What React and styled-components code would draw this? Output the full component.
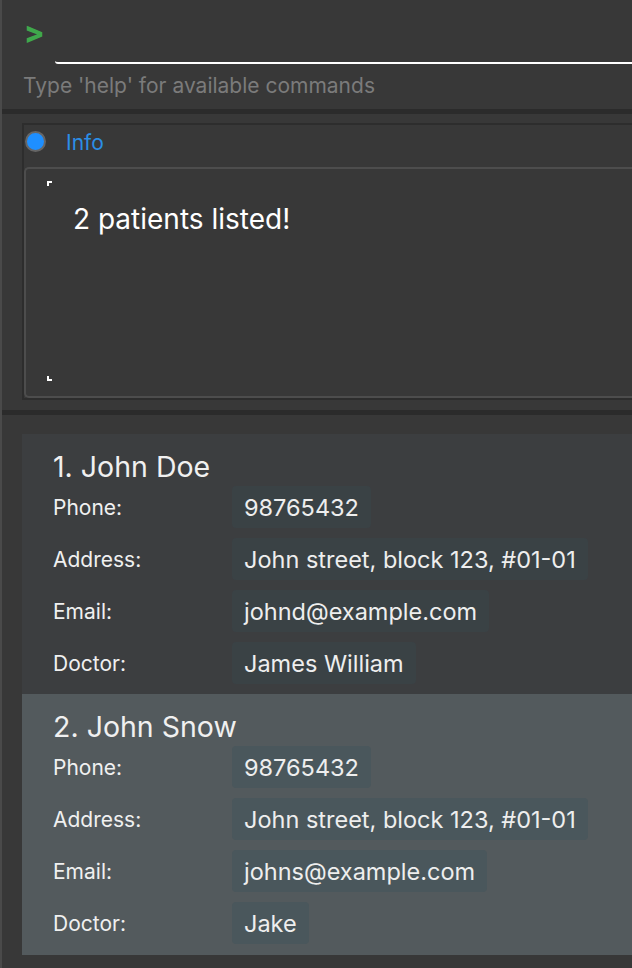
import { createGlobalStyle, styled } from 'styled-components'

const patients = [
  {
    id: 1,
    name: 'John Doe',
    phone: '98765432',
    address: 'John street, block 123, #01-01',
    email: 'johnd@example.com',
    doctor: 'James William',
  },
  {
    id: 2,
    name: 'John Snow',
    phone: '98765432',
    address: 'John street, block 123, #01-01',
    email: 'johns@example.com',
    doctor: 'Jake',
    selected: true,
  },
]

const App = () => {
  return (
    <>
      <GlobalStyle />
      <Window>
        <CommandBox>
          <CommandRow>
            <Prompt>&gt;</Prompt>
            <CommandInput spellCheck={false} />
          </CommandRow>
          <Hint>Type 'help' for available commands</Hint>
        </CommandBox>
        <Divider />
        <ResultPanel>
          <ResultFrame>
            <StatusRow>
              <StatusDot />
              <StatusText>Info</StatusText>
            </StatusRow>
            <ResultBox>
              <CornerMark $bottom={false} />
              <ResultText>2 patients listed!</ResultText>
              <CornerMark $bottom />
            </ResultBox>
          </ResultFrame>
        </ResultPanel>
        <Divider />
        <ListPanel>
          {patients.map((p) => (
            <Card key={p.id} $selected={p.selected}>
              <Name>
                {p.id}. {p.name}
              </Name>
              <Field label="Phone:" value={p.phone} selected={p.selected} />
              <Field label="Address:" value={p.address} selected={p.selected} />
              <Field label="Email:" value={p.email} selected={p.selected} />
              <Field label="Doctor:" value={p.doctor} selected={p.selected} />
            </Card>
          ))}
        </ListPanel>
      </Window>
    </>
  )
}
export default App

const Field = ({ label, value, selected }) => (
  <FieldRow>
    <Label>{label}</Label>
    <Chip $selected={selected}>{value}</Chip>
  </FieldRow>
)

const GlobalStyle = createGlobalStyle`
  html, body {
    margin: 0;
    padding: 0;
    background: #383838;
    overflow: hidden;
  }
  body {
    font-family: Inter, "Open Sans", "Liberation Sans", sans-serif;
  }
  * {
    box-sizing: border-box;
  }
`

const Window = styled.div`
  width: 632px;
  height: 968px;
  display: flex;
  flex-direction: column;
  border-left: 2px solid #4a4a4a;
  background: #383838;
  overflow: hidden;
`

const CommandBox = styled.div`
  height: 109px;
  padding: 0 0 0 20px;
  display: flex;
  flex-direction: column;
`

const CommandRow = styled.div`
  display: flex;
  height: 64px;
`

const Prompt = styled.div`
  width: 33px;
  padding: 17px 0 0 2px;
  color: #3fa84c;
  font-size: 30px;
  font-weight: 800;
  line-height: 30px;
`

const CommandInput = styled.input`
  flex: 1;
  min-width: 0;
  background: transparent;
  border: none;
  border-bottom: 2px solid #ffffff;
  border-bottom-left-radius: 3px;
  color: #ffffff;
  outline: none;
  margin-right: -20px;
`

const Hint = styled.div`
  margin-top: 10px;
  padding-left: 1px;
  color: #7b7b7b;
  font-size: 21px;
  line-height: 24px;
  white-space: nowrap;
`

const Divider = styled.div`
  height: 5px;
  background: #2b2b2b;
  flex-shrink: 0;
`

const ResultPanel = styled.div`
  height: 296px;
  padding: 9px 0 0 20px;
  flex-shrink: 0;
`

const ResultFrame = styled.div`
  height: 277px;
  margin-right: -20px;
  border: 2px solid #2d2d2d;
  border-right: none;
  display: flex;
  flex-direction: column;
`

const StatusRow = styled.div`
  height: 42px;
  display: flex;
  align-items: center;
  gap: 20px;
  padding: 0 0 10px 1px;
`

const StatusDot = styled.span`
  width: 21px;
  height: 21px;
  border-radius: 50%;
  background: #1e8fff;
  border: 2px solid #666666;
`

const StatusText = styled.span`
  color: #2b8ee6;
  font-size: 21px;
  line-height: 24px;
  margin-top: 3px;
`

const ResultBox = styled.div`
  position: relative;
  flex: 1;
  border: 2px solid #4d4d4d;
  border-right: none;
  border-radius: 5px 0 0 5px;
  padding: 32px 0 0 47px;
`

const CornerMark = styled.span`
  position: absolute;
  left: 21px;
  width: 5px;
  height: 5px;
  border-left: 2px solid #ffffff;
  ${({ $bottom }) =>
    $bottom
      ? 'bottom: 15px; border-bottom: 2px solid #ffffff;'
      : 'top: 12px; border-top: 2px solid #ffffff;'}
`

const ResultText = styled.div`
  color: #ffffff;
  font-size: 28px;
  line-height: 36px;
`

const ListPanel = styled.div`
  flex: 1;
  padding: 19px 0 0 20px;
  display: flex;
  flex-direction: column;
`

const Card = styled.div`
  height: ${({ $selected }) => ($selected ? '261px' : '260px')};
  margin-right: -20px;
  padding: 14px 0 0 31px;
  background: ${({ $selected }) => ($selected ? '#535a5d' : '#3c3e40')};
  display: flex;
  flex-direction: column;
  gap: 10px;
`

const Name = styled.div`
  color: #f0f0f0;
  font-size: 28.5px;
  line-height: 38px;
  margin-bottom: -10px;
`

const FieldRow = styled.div`
  display: flex;
  align-items: center;
  height: 42px;
`

const Label = styled.div`
  width: 179px;
  color: #f0f0f0;
  font-size: 21px;
`

const Chip = styled.div`
  height: 42px;
  display: flex;
  align-items: center;
  padding: 0 12px;
  border-radius: 4px;
  background: ${({ $selected }) => ($selected ? '#4a575c' : '#3a4245')};
  color: #eeeeee;
  font-size: 23.5px;
  white-space: nowrap;
`
